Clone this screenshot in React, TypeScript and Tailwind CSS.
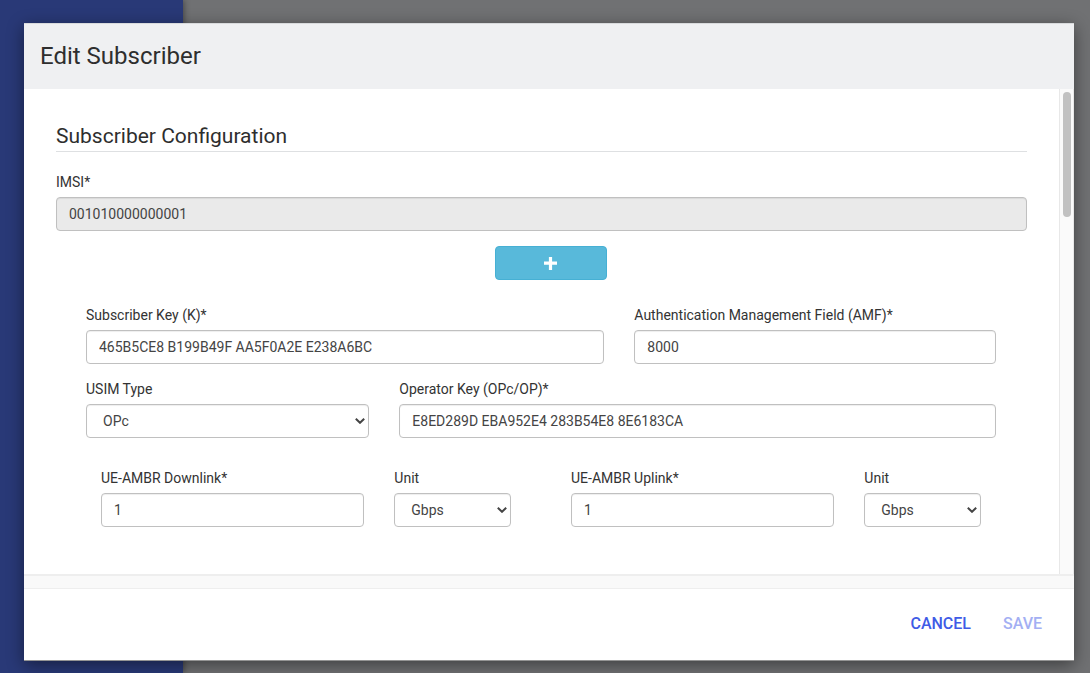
import React, { useId } from "react";

const control =
  "block h-[34px] w-full rounded-[4px] border border-[#c0c0c0] bg-white px-3 text-sm text-[#444444] shadow-[inset_0_1px_1px_rgba(0,0,0,0.07)] outline-none focus:border-[#66afe9]";

function Field({
  label,
  value,
  className = "",
  disabled = false,
}: {
  label: string;
  value: string;
  className?: string;
  disabled?: boolean;
}) {
  const id = useId();
  return (
    <div className={className}>
      <label htmlFor={id} className="mb-[5px] block text-sm leading-5 text-[#333333]">
        {label}
      </label>
      <input
        id={id}
        type="text"
        defaultValue={value}
        disabled={disabled}
        className={`${control} disabled:bg-[#eaeaea]`}
      />
    </div>
  );
}

function SelectField({
  label,
  options,
  className = "",
}: {
  label: string;
  options: string[];
  className?: string;
}) {
  const id = useId();
  return (
    <div className={className}>
      <label htmlFor={id} className="mb-[5px] block text-sm leading-5 text-[#333333]">
        {label}
      </label>
      <div className="grid items-center">
        <select
          id={id}
          className={`${control} col-start-1 row-start-1 appearance-none pl-4`}
        >
          {options.map((o) => (
            <option key={o}>{o}</option>
          ))}
        </select>
        <svg
          viewBox="0 0 10 6"
          className="pointer-events-none col-start-1 row-start-1 mr-1 h-[6px] w-[10px] justify-self-end"
          fill="none"
          stroke="#444444"
          strokeWidth="2"
          aria-hidden="true"
        >
          <path d="M0.8 0.8 5 4.8 9.2 0.8" />
        </svg>
      </div>
    </div>
  );
}

const units = ["Gbps", "Mbps", "Kbps", "bps"];

export default function App() {
  return (
    <div className="relative flex min-h-screen bg-[#707173] font-['Roboto',sans-serif]">
      <aside className="w-[183px] shrink-0 bg-[#293977] shadow-[1px_0_6px_rgba(0,0,0,0.4)]" />
      <div className="absolute inset-0 flex pt-[23px] pr-4 pb-3 pl-6">
        <section
          role="dialog"
          aria-labelledby="dialog-title"
          className="flex min-w-0 flex-1 flex-col bg-white shadow-[0_4px_16px_rgba(0,0,0,0.45)]"
        >
          <header className="border-t border-[#d8dadc] bg-[#eff0f2] px-4 pt-4 pb-[17px]">
            <h1 id="dialog-title" className="text-2xl text-[#2e2e2e]">
              Edit Subscriber
            </h1>
          </header>

          <div className="flex min-h-0 flex-1">
            <div className="min-w-0 flex-1 overflow-hidden px-8 pt-8">
              <h2 className="border-b border-[#dee0e2] text-[21px] leading-[30px] text-[#2e2e2e]">
                Subscriber Configuration
              </h2>
              <Field label="IMSI*" value="001010000000001" disabled className="mt-5" />
              <div className="mt-[15px] flex justify-center pl-[18px]">
                <button
                  type="button"
                  aria-label="Add"
                  className="flex h-[34px] w-28 items-center justify-center rounded-[4px] border border-[#46b0d4] bg-[#58b9da]"
                >
                  <svg viewBox="0 0 13 13" className="size-[13px]" fill="white" aria-hidden="true">
                    <path d="M4.9 0h3.2v4.6H13v3.2H8.1V13H4.9V7.8H0V4.6h4.9z" />
                  </svg>
                </button>
              </div>

              <div className="mr-[31px] ml-[30px] mt-[25px] grid grid-cols-12 gap-x-[30px] gap-y-[15px]">
                <Field
                  label="Subscriber Key (K)*"
                  value="465B5CE8 B199B49F AA5F0A2E E238A6BC"
                  className="col-span-7"
                />
                <Field
                  label="Authentication Management Field (AMF)*"
                  value="8000"
                  className="col-span-5"
                />
                <SelectField label="USIM Type" options={["OPc", "OP"]} className="col-span-4" />
                <Field
                  label="Operator Key (OPc/OP)*"
                  value="E8ED289D EBA952E4 283B54E8 8E6183CA"
                  className="col-span-8"
                />
              </div>

              <div className="mr-[46px] ml-[45px] mt-[30px] grid grid-cols-2 gap-x-[60px]">
                <div className="grid grid-cols-12 gap-x-[30px]">
                  <Field label="UE-AMBR Downlink*" value="1" className="col-span-8" />
                  <SelectField label="Unit" options={units} className="col-span-4" />
                </div>
                <div className="grid grid-cols-12 gap-x-[30px]">
                  <Field label="UE-AMBR Uplink*" value="1" className="col-span-8" />
                  <SelectField label="Unit" options={units} className="col-span-4" />
                </div>
              </div>
            </div>
            <div className="w-[15px] shrink-0 border-x border-[#e8e8e8] bg-[#fafafa] pt-[3px] pl-[3px]">
              <div className="h-[125px] w-2 rounded-full bg-[#c1c1c1]" />
            </div>
          </div>
          <div className="h-[15px] shrink-0 border-t-2 border-b border-[#eeeeee] bg-[#f9f9f9]" />

          <footer className="flex justify-end gap-8 border-b border-[#949494] px-8 pt-[23px] pb-6">
            <button type="button" className="text-base font-medium text-[#405be6]">
              CANCEL
            </button>
            <button type="button" disabled className="text-base font-medium text-[#a3aff3]">
              SAVE
            </button>
          </footer>
        </section>
      </div>
    </div>
  );
}
